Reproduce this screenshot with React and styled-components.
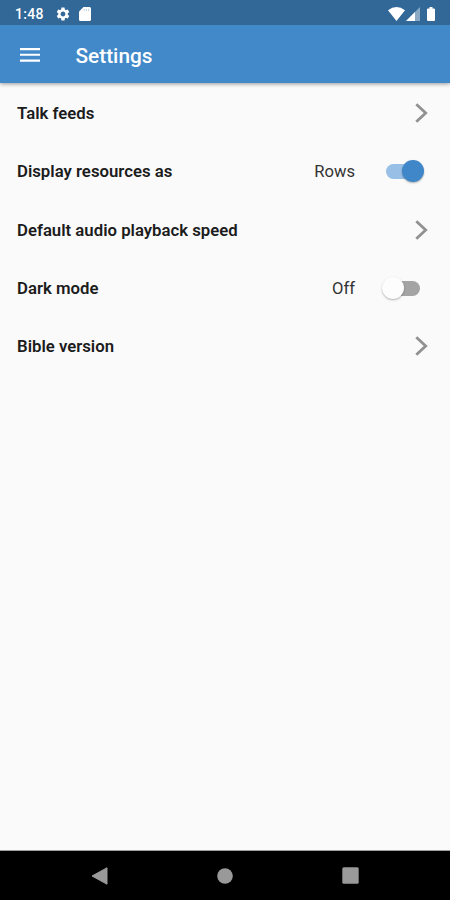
import React, { useState } from 'react'
import styled, { createGlobalStyle } from 'styled-components'
import { MdSettings } from 'react-icons/md'

const GlobalStyle = createGlobalStyle`
  * {
    box-sizing: border-box;
  }
  body {
    margin: 0;
    font-family: Roboto, 'Liberation Sans', sans-serif;
    background-color: #fafafa;
  }
`;

const Container = styled.div`
  width: 100%;
  height: 100vh;
  display: flex;
  flex-direction: column;
  background-color: #fafafa;
  overflow: hidden;
`;

const Header = styled.header`
  background-color: #4189c9;
  box-shadow: 0 1px 4px rgba(0, 0, 0, 0.4);
`;

const StatusBar = styled.div`
  height: 25px;
  display: flex;
  align-items: center;
  padding: 2px 15px 0 15px;
  color: white;
  background-color: #316897;
`;

const Clock = styled.span`
  width: 29px;
  margin-right: 10.5px;
  font-size: 14px;
  font-weight: 500;
  line-height: 22px;
  letter-spacing: 0.3px;
`;

const Signals = styled.div`
  display: flex;
  align-items: center;
  margin-left: auto;
`;

const Icon = styled.svg`
  display: block;
  flex: none;
  margin-left: ${props => props.$gap || 0}px;
`;

const AppBar = styled.div`
  height: 58px;
  display: flex;
  align-items: center;
  padding: 2px 0 0 20px;
`;

const MenuButton = styled.button`
  display: flex;
  padding: 0;
  border: none;
  background: none;
  cursor: pointer;
`;

const Title = styled.h1`
  margin: 1px 0 0 35.5px;
  font-size: 20.8px;
  font-weight: 500;
  line-height: 26px;
  color: white;
`;

const List = styled.main`
  flex: 1;
  padding-top: 1px;
`;

const Row = styled.div`
  height: 58.3px;
  display: flex;
  align-items: center;
  padding: 0 22px 0 17px;
`;

const Label = styled.span`
  flex: 1;
  font-size: 16.75px;
  font-weight: 600;
  color: #1c1c1c;
`;

const Value = styled.span`
  margin-right: 27px;
  font-size: 16.6px;
  color: #333333;
`;

const Switch = styled.button`
  position: relative;
  width: 42px;
  height: 22px;
  display: flex;
  align-items: center;
  justify-content: ${props => props.$on ? 'flex-end' : 'flex-start'};
  padding: 0;
  margin-right: 4px;
  border: none;
  background: none;
  cursor: pointer;

  &::before {
    content: '';
    position: absolute;
    left: 4px;
    top: 4px;
    width: 34px;
    height: 15px;
    border-radius: 8px;
    background-color: ${props => props.$on ? '#98c0e6' : '#a4a4a4'};
  }
`;

const Thumb = styled.span`
  width: 22px;
  height: 22px;
  border-radius: 50%;
  background-color: ${props => props.$on ? '#3f87c8' : '#fdfdfd'};
  box-shadow: 0 1px 2px rgba(0, 0, 0, 0.3);
  z-index: 1;
`;

const NavBar = styled.nav`
  height: 49px;
  display: flex;
  align-items: center;
  justify-content: space-between;
  padding: 0 91px;
  background-color: black;
  box-shadow: 0 -1px 0 #a0a0a0;
`;

const items = [
    { id: 1, label: 'Talk feeds' },
    { id: 2, label: 'Display resources as', key: 'rows', on: 'Rows', off: 'Tiles' },
    { id: 3, label: 'Default audio playback speed' },
    { id: 4, label: 'Dark mode', key: 'dark', on: 'On', off: 'Off' },
    { id: 5, label: 'Bible version' },
]

const Chevron = () => (
    <Icon width="13" height="20" viewBox="0 0 13 20">
        <path d="M1.3 1.2L10.7 10L1.3 18.8" fill="none" stroke="#919191" strokeWidth="2.8" />
    </Icon>
)

const App = () => {
    const [settings, setSettings] = useState({ rows: true, dark: false })

    const toggle = (key) => {
        setSettings({ ...settings, [key]: !settings[key] })
    }

    return (
        <Container>
            <GlobalStyle />
            <Header>
                <StatusBar>
                    <Clock>1:48</Clock>
                    <MdSettings size={16} />
                    <Icon $gap={8.5} width="12" height="14" viewBox="0 0 12 14">
                        <path d="M4.5 0H10.5Q12 0 12 1.5V12.5Q12 14 10.5 14H1.5Q0 14 0 12.5V4.5Z" fill="white" />
                        <path d="M5.2 1.8V4.2M7.4 1.8V4.2M9.6 1.8V4.2" stroke="#c5d4e2" />
                    </Icon>
                    <Signals>
                        <Icon width="17" height="14" viewBox="0 0 18 14" preserveAspectRatio="none">
                            <path d="M0 3.3Q9 -3.2 18 3.3L9 14Z" fill="white" />
                        </Icon>
                        <Icon $gap={1} width="14" height="14" viewBox="0 0 14 14">
                            <path d="M14 0V14H0Z" fill="#8aa9c4" />
                            <path d="M9 5V14H0Z" fill="white" />
                        </Icon>
                        <Icon $gap={7} width="8" height="14" viewBox="0 0 8 14">
                            <path d="M2.5 0H5.5V1.5H7Q8 1.5 8 2.5V13Q8 14 7 14H1Q0 14 0 13V2.5Q0 1.5 1 1.5H2.5Z" fill="white" />
                        </Icon>
                    </Signals>
                </StatusBar>
                <AppBar>
                    <MenuButton aria-label="Menu">
                        <Icon width="20" height="14" viewBox="0 0 20 14">
                            <path d="M0 1.1H20M0 6.8H20M0 12.6H20" stroke="white" strokeWidth="2.1" />
                        </Icon>
                    </MenuButton>
                    <Title>Settings</Title>
                </AppBar>
            </Header>
            <List>
                {items.map(item => (
                    <Row key={item.id}>
                        <Label>{item.label}</Label>
                        {item.key ? (
                            <>
                                <Value>{settings[item.key] ? item.on : item.off}</Value>
                                <Switch
                                    role="switch"
                                    aria-label={item.label}
                                    aria-checked={settings[item.key]}
                                    $on={settings[item.key]}
                                    onClick={() => toggle(item.key)}
                                >
                                    <Thumb $on={settings[item.key]} />
                                </Switch>
                            </>
                        ) : (
                            <Chevron />
                        )}
                    </Row>
                ))}
            </List>
            <NavBar>
                <Icon width="17" height="18" viewBox="0 0 17 18">
                    <path d="M16 0.8V17.2L1 9Z" fill="#999999" stroke="#999999" strokeLinejoin="round" />
                </Icon>
                <Icon width="16" height="16" viewBox="0 0 16 16">
                    <circle cx="8" cy="8" r="7.8" fill="#999999" />
                </Icon>
                <Icon width="17" height="17" viewBox="0 0 17 17">
                    <rect x="0.3" y="0.3" width="16.4" height="16.4" rx="1.5" fill="#999999" />
                </Icon>
            </NavBar>
        </Container>
    )
}

export default App
